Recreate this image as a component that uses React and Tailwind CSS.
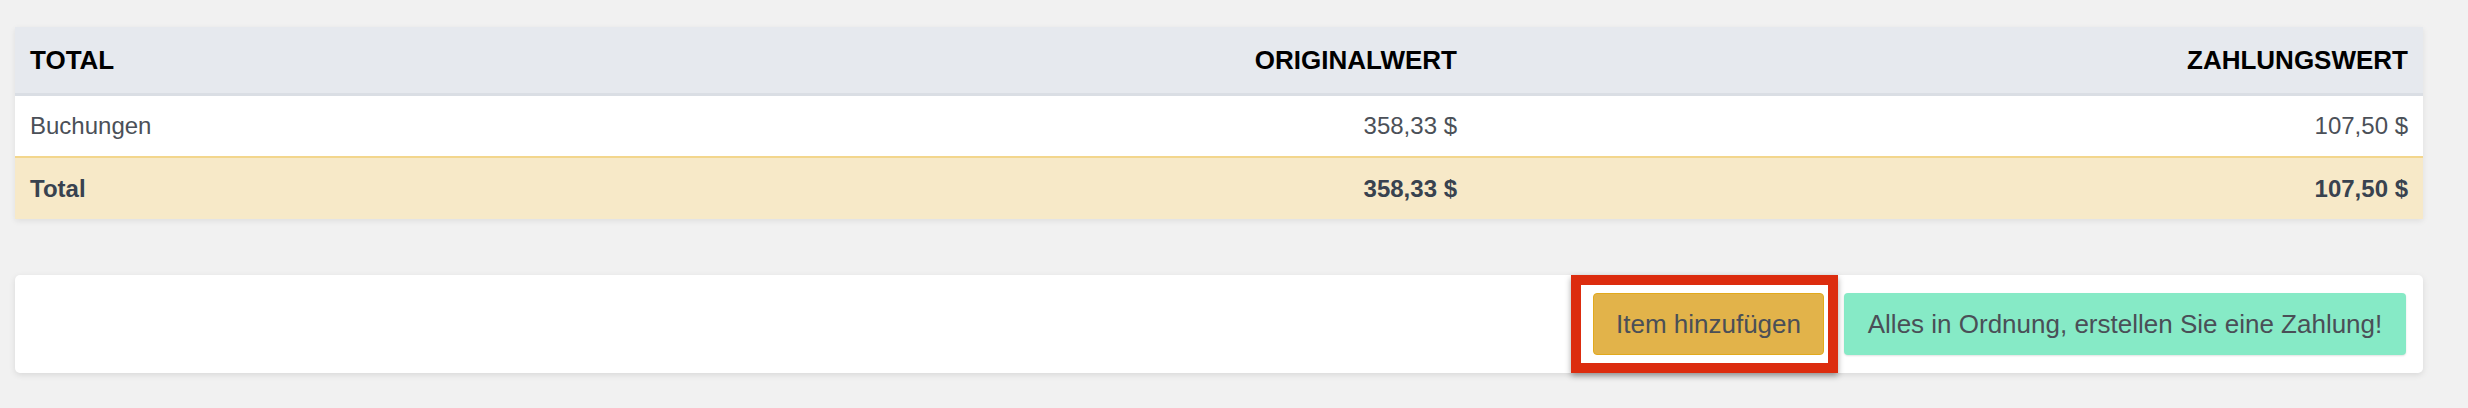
import React from 'react';

const rows = [{ label: 'Buchungen', original: '358,33 $', payment: '107,50 $' }];

export default function App() {
  return (
    <div
      className="min-h-screen bg-[#f1f1f1] pt-[27px] pl-[15px] pr-[45px]"
      style={{ fontFamily: '"Liberation Sans", Arial, sans-serif' }}
    >
      <div className="bg-white shadow-[0_2px_6px_rgba(0,0,0,0.08)]">
        <div className="grid grid-cols-[700px_757px_1fr] h-[69px] items-center bg-[#e6e9ee] border-b-[3px] border-[#dadee4] text-[26px] font-bold text-black">
          <div className="pl-[15px]">TOTAL</div>
          <div className="text-right pr-[15px]">ORIGINALWERT</div>
          <div className="text-right pr-[15px]">ZAHLUNGSWERT</div>
        </div>
        {rows.map((r) => (
          <div
            key={r.label}
            className="grid grid-cols-[700px_757px_1fr] h-[62px] items-center bg-white border-b-2 border-[#f3d68c] text-[24px] text-[#4b5058]"
          >
            <div className="pl-[15px]">{r.label}</div>
            <div className="text-right pr-[15px]">{r.original}</div>
            <div className="text-right pr-[15px]">{r.payment}</div>
          </div>
        ))}
        <div className="grid grid-cols-[700px_757px_1fr] h-[61px] items-center bg-[#f7e9c8] text-[24px] font-bold text-[#38424f]">
          <div className="pl-[15px]">Total</div>
          <div className="text-right pr-[15px]">358,33 $</div>
          <div className="text-right pr-[15px]">107,50 $</div>
        </div>
      </div>

      <div className="mt-[56px] h-[98px] bg-white rounded-[5px] shadow-[0_2px_6px_rgba(0,0,0,0.1)] flex items-center justify-end gap-[20px] pr-[17px]">
        <div className="relative">
          <div className="absolute left-[-22px] right-[-14px] top-[-18px] bottom-[-18px] border-[10px] border-[#dc2c0e] shadow-[0_3px_6px_rgba(0,0,0,0.35)]" />
          <button className="relative h-[62px] w-[231px] rounded-[4px] bg-[#e2b34a] border border-[#e2a91c] text-[26px] text-[#4a4f57]">
            Item hinzufügen
          </button>
        </div>
        <button className="h-[62px] w-[562px] rounded-[4px] bg-[#86eac6] shadow-[0_1px_2px_rgba(0,0,0,0.12)] text-[26px] text-[#4a4f57]">
          Alles in Ordnung, erstellen Sie eine Zahlung!
        </button>
      </div>
    </div>
  );
}
